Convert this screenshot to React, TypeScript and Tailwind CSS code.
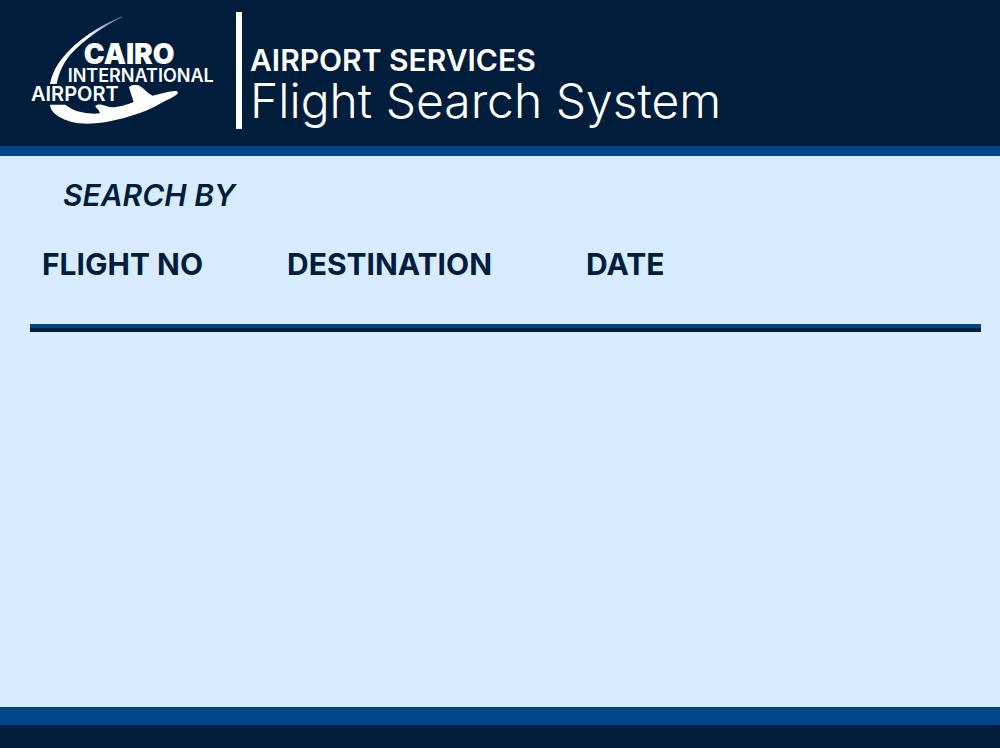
const criteria = ["FLIGHT NO", "DESTINATION", "DATE"];

function Logo() {
  return (
    <svg
      viewBox="0 0 600 405"
      className="h-[135px] w-[200px] shrink-0 fill-white font-['Inter',sans-serif]"
      role="img"
      aria-label="Cairo International Airport"
    >
      <defs>
        <linearGradient id="trail" x1="0" y1="1" x2="1" y2="0">
          <stop offset="0.6" stopColor="#ffffff" />
          <stop offset="1" stopColor="#ffffff" stopOpacity="0.35" />
        </linearGradient>
      </defs>
      <path
        fill="url(#trail)"
        d="M90 237 C96 205 110 180 130 156 C172 105 235 64 306 34 L306 37 C246 66 188 108 150 150 C128 177 117 204 110 237 Z"
      />
      <path d="M90 299 H136 C150 310 166 318 187 322 C207 327 226 327 240 325 C238 315 231 311 226 305 C228 299 236 298 245 299 C258 301 265 306 276 307 C297 307 321 299 341 291 C337 278 330 259 327 247 C332 239 346 239 355 241 C371 248 380 264 398 272 C420 267 449 258 467 258 C474 258 475 263 472 267 C460 278 438 286 420 296 C386 316 340 332 296 343 C258 353 216 359 178 355 C139 350 91 329 90 299 Z" />
      <text x="191" y="177" fontSize="84" fontWeight="900">CAIRO</text>
      <text x="143" y="231" fontSize="54" fontWeight="600">INTERNATIONAL</text>
      <text x="33" y="288" fontSize="60" fontWeight="600">AIRPORT</text>
    </svg>
  );
}

export default function App() {
  return (
    <div className="flex min-h-screen flex-col bg-[#d9ebff] font-['Inter',sans-serif] text-[#001e3c]">
      <header className="flex h-[156px] items-start border-b-[10px] border-[#004489] bg-[#001e3c] pl-5 text-white">
        <div className="flex pt-[5px]">
          <Logo />
        </div>
        <div className="mt-3 ml-4 flex h-[117px] items-start border-l-[6px] border-white pl-2">
          <h1 className="pt-8">
            <span className="block text-[30px] leading-8 font-semibold">AIRPORT SERVICES</span>
            <span className="block text-[48px] leading-[50px] font-light">Flight Search System</span>
          </h1>
        </div>
      </header>

      <main className="grow pr-[19px] pl-[30px]">
        <section className="border-b-4 border-[#001e3c]" aria-labelledby="search-by">
          <div className="border-b-4 border-[#004489] pt-[23px] pb-11">
            <h2 id="search-by" className="pl-[33px] text-[30px] leading-8 font-semibold italic">
              SEARCH BY
            </h2>
            <div className="grid grid-cols-[245px_299px_1fr] justify-items-start pt-[37px] pl-3">
              {criteria.map((name) => (
                <button key={name} type="button" className="text-[30px] leading-8 font-bold">
                  {name}
                </button>
              ))}
            </div>
          </div>
        </section>
      </main>

      <footer className="h-[41px] border-t-[18px] border-[#004489] bg-[#001e3c]" />
    </div>
  );
}
